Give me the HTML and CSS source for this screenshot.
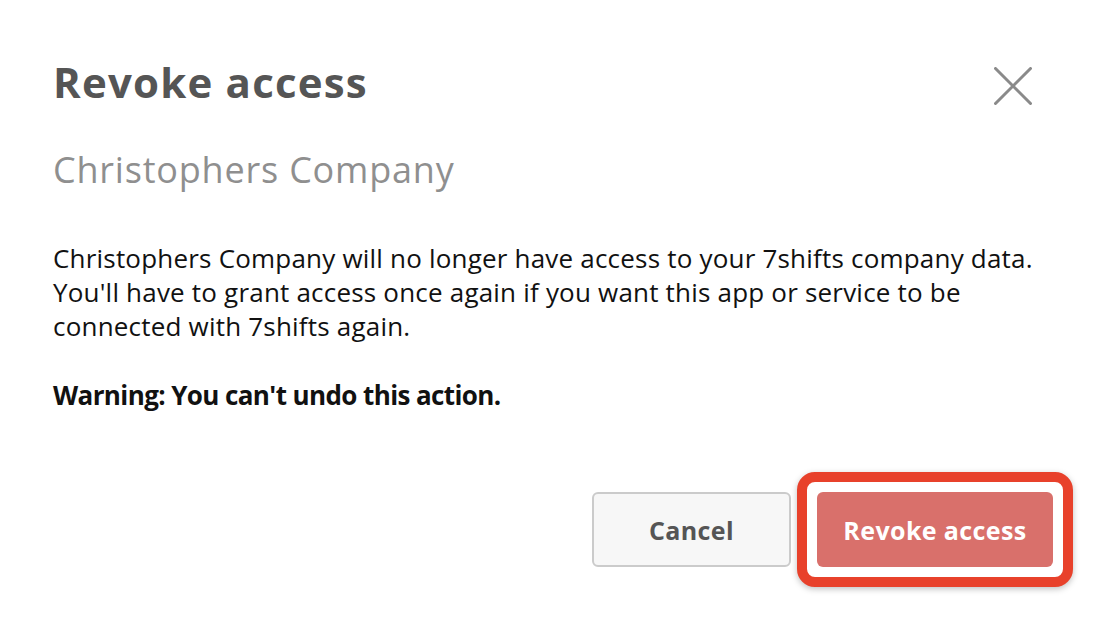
FILE: index.html
```html
<!DOCTYPE html>
<html>
<head>
<meta charset="utf-8">
<link rel="stylesheet" href="styles.css">
</head>
<body>
<div class="dialog">
  <div class="header">
    <h1 class="title">Revoke access</h1>
    <button class="close" aria-label="Close">
      <svg width="38" height="38" viewBox="0 0 38 38"><path d="M1.5 1.5L36.5 36.5M36.5 1.5L1.5 36.5" stroke="#8a8a8a" stroke-width="3" stroke-linecap="round"/></svg>
    </button>
  </div>
  <h2 class="subtitle">Christophers Company</h2>
  <p class="text">Christophers Company will no longer have access to your 7shifts company data. You'll have to grant access once again if you want this app or service to be connected with 7shifts again.</p>
  <p class="warning">Warning: You can't undo this action.</p>
  <div class="actions">
    <button class="btn btn-cancel">Cancel</button>
    <div class="highlight">
      <button class="btn btn-revoke">Revoke access</button>
    </div>
  </div>
</div>
</body>
</html>
```

FILE: styles.css
```css
html, body {
  margin: 0;
  padding: 0;
  background: #fff;
}
body {
  font-family: "Open Sans", "Liberation Sans", sans-serif;
  color: #111;
}
.dialog {
  width: 1112px;
  height: 625px;
  box-sizing: border-box;
  padding: 54px 80px 0 53px;
}
.header {
  display: flex;
  justify-content: space-between;
  align-items: flex-start;
}
.title {
  margin: 0;
  font-size: 42px;
  line-height: 56px;
  font-weight: 700;
  letter-spacing: 1.2px;
  color: #555;
}
.close {
  border: 0;
  background: none;
  padding: 0;
  margin-top: 13px;
  width: 38px;
  height: 38px;
  cursor: pointer;
}
.close svg { display: block; }
.subtitle {
  margin: 38px 0 0;
  font-size: 36px;
  line-height: 44px;
  font-weight: 400;
  letter-spacing: 0.8px;
  color: #8f8f8f;
}
.text {
  margin: 49px -14px 0 0;
  font-size: 26px;
  line-height: 34px;
  letter-spacing: 0.2px;
  color: #111;
}
.warning {
  margin: 35px 0 0;
  font-size: 26px;
  line-height: 34px;
  font-weight: 700;
  letter-spacing: -0.6px;
  color: #111;
}
.actions {
  display: flex;
  justify-content: flex-end;
  align-items: center;
  gap: 6px;
  margin-top: 60px;
  margin-right: -41px;
}
.btn {
  font-family: inherit;
  font-size: 25px;
  font-weight: 700;
  letter-spacing: 0.4px;
  border-radius: 6px;
  height: 75px;
  cursor: pointer;
}
.btn-cancel {
  width: 199px;
  background: #f7f7f7;
  border: 2px solid #cbcbcb;
  color: #555;
}
.highlight {
  border: 10px solid #e8412b;
  border-radius: 18px;
  padding: 10px;
  background: #fff;
  box-shadow: 0 2px 6px rgba(0,0,0,0.25);
  display: flex;
}
.btn-revoke {
  width: 236px;
  background: #d9706b;
  border: 0;
  color: #fff;
}
```
